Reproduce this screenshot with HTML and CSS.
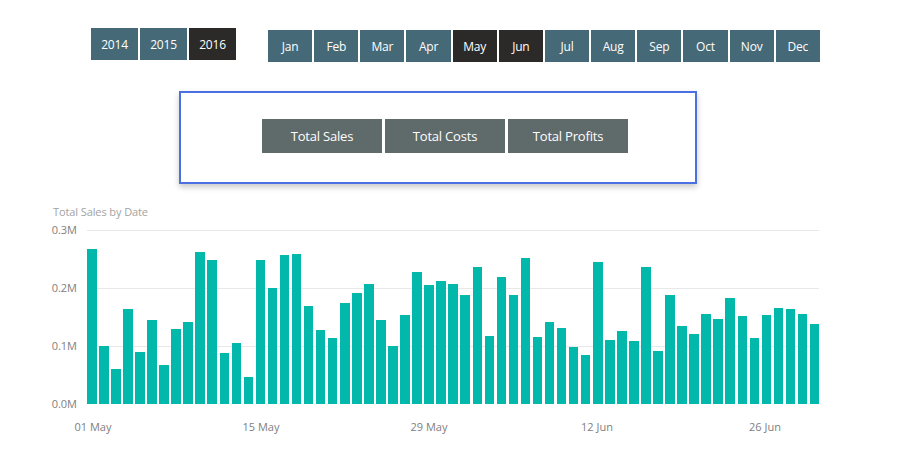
FILE: index.html
```html
<!DOCTYPE html>
<html lang="en">
<head>
<meta charset="utf-8">
<title>Sales Dashboard</title>
<link rel="stylesheet" href="styles.css">
</head>
<body>
<div class="top">
  <div class="years">
    <div class="btn year">2014</div>
    <div class="btn year">2015</div>
    <div class="btn year selected">2016</div>
  </div>
  <div class="months">
    <div class="btn month">Jan</div>
    <div class="btn month">Feb</div>
    <div class="btn month">Mar</div>
    <div class="btn month">Apr</div>
    <div class="btn month selected">May</div>
    <div class="btn month selected">Jun</div>
    <div class="btn month">Jul</div>
    <div class="btn month">Aug</div>
    <div class="btn month">Sep</div>
    <div class="btn month">Oct</div>
    <div class="btn month">Nov</div>
    <div class="btn month">Dec</div>
  </div>
</div>

<div class="card">
  <div class="metric">Total Sales</div>
  <div class="metric">Total Costs</div>
  <div class="metric">Total Profits</div>
</div>

<div class="chart">
  <div class="chart-title">Total Sales by Date</div>
  <div class="chart-body">
    <div class="yaxis">
      <span>0.3M</span>
      <span>0.2M</span>
      <span>0.1M</span>
      <span>0.0M</span>
    </div>
    <div class="plot">
      <div class="bar" style="height:155px"></div>
      <div class="bar" style="height:58px"></div>
      <div class="bar" style="height:35px"></div>
      <div class="bar" style="height:95px"></div>
      <div class="bar" style="height:52px"></div>
      <div class="bar" style="height:84px"></div>
      <div class="bar" style="height:39px"></div>
      <div class="bar" style="height:75px"></div>
      <div class="bar" style="height:82px"></div>
      <div class="bar" style="height:152px"></div>
      <div class="bar" style="height:144px"></div>
      <div class="bar" style="height:51px"></div>
      <div class="bar" style="height:61px"></div>
      <div class="bar" style="height:27px"></div>
      <div class="bar" style="height:144px"></div>
      <div class="bar" style="height:116px"></div>
      <div class="bar" style="height:149px"></div>
      <div class="bar" style="height:150px"></div>
      <div class="bar" style="height:98px"></div>
      <div class="bar" style="height:74px"></div>
      <div class="bar" style="height:66px"></div>
      <div class="bar" style="height:101px"></div>
      <div class="bar" style="height:111px"></div>
      <div class="bar" style="height:120px"></div>
      <div class="bar" style="height:84px"></div>
      <div class="bar" style="height:58px"></div>
      <div class="bar" style="height:89px"></div>
      <div class="bar" style="height:132px"></div>
      <div class="bar" style="height:119px"></div>
      <div class="bar" style="height:123px"></div>
      <div class="bar" style="height:120px"></div>
      <div class="bar" style="height:109px"></div>
      <div class="bar" style="height:137px"></div>
      <div class="bar" style="height:68px"></div>
      <div class="bar" style="height:127px"></div>
      <div class="bar" style="height:109px"></div>
      <div class="bar" style="height:146px"></div>
      <div class="bar" style="height:67px"></div>
      <div class="bar" style="height:82px"></div>
      <div class="bar" style="height:76px"></div>
      <div class="bar" style="height:57px"></div>
      <div class="bar" style="height:49px"></div>
      <div class="bar" style="height:142px"></div>
      <div class="bar" style="height:64px"></div>
      <div class="bar" style="height:73px"></div>
      <div class="bar" style="height:63px"></div>
      <div class="bar" style="height:137px"></div>
      <div class="bar" style="height:53px"></div>
      <div class="bar" style="height:109px"></div>
      <div class="bar" style="height:78px"></div>
      <div class="bar" style="height:70px"></div>
      <div class="bar" style="height:90px"></div>
      <div class="bar" style="height:85px"></div>
      <div class="bar" style="height:106px"></div>
      <div class="bar" style="height:88px"></div>
      <div class="bar" style="height:66px"></div>
      <div class="bar" style="height:89px"></div>
      <div class="bar" style="height:96px"></div>
      <div class="bar" style="height:95px"></div>
      <div class="bar" style="height:90px"></div>
      <div class="bar" style="height:80px"></div>
    </div>
    <div class="xaxis">
      <span>01 May</span>
      <span>15 May</span>
      <span>29 May</span>
      <span>12 Jun</span>
      <span>26 Jun</span>
    </div>
  </div>
</div>
</body>
</html>
```

FILE: styles.css
```css
html, body {
  margin: 0;
  padding: 0;
  background: #ffffff;
}

body {
  font-family: "Open Sans", "Noto Sans", sans-serif;
  width: 907px;
  height: 459px;
  overflow: hidden;
}

.top {
  display: flex;
  align-items: flex-start;
  padding: 28px 0 0 91px;
}

.years {
  display: flex;
  gap: 2px;
}

.months {
  display: flex;
  gap: 2px;
  margin: 2px 0 0 32px;
}

.btn {
  display: flex;
  align-items: center;
  justify-content: center;
  height: 32px;
  background: #456977;
  color: #ffffff;
  font-size: 12px;
  letter-spacing: -0.2px;
}

.year {
  width: 47px;
}

.month {
  width: 44.17px;
}

.btn.selected {
  background: #2c2a29;
}

.card {
  box-sizing: border-box;
  width: 518px;
  height: 93px;
  margin: 29px 0 0 179px;
  border: 2px solid #4b70e2;
  box-shadow: 0 3px 6px rgba(0, 0, 0, 0.22);
  padding: 26px 0 0 81px;
  display: flex;
  gap: 3px;
  align-items: flex-start;
}

.metric {
  width: 120px;
  height: 34px;
  display: flex;
  align-items: center;
  justify-content: center;
  background: #5f6a6a;
  color: #ffffff;
  font-size: 13px;
  letter-spacing: -0.2px;
}

.chart {
  margin: 21px 0 0 53px;
}

.chart-title {
  font-size: 11px;
  line-height: 14px;
  color: #a3a3a3;
  margin-bottom: 11px;
  letter-spacing: -0.1px;
}

.chart-body {
  display: grid;
  grid-template-columns: 34px 732px;
}

.yaxis {
  height: 188px;
  margin-top: -7px;
  display: flex;
  flex-direction: column;
  justify-content: space-between;
  align-items: flex-end;
  padding-right: 10px;
  font-size: 11px;
  line-height: 14px;
  color: #808080;
}

.plot {
  height: 174px;
  display: flex;
  align-items: flex-end;
  gap: 2.5px;
  background-image: repeating-linear-gradient(to bottom, #e8e8e8 0, #e8e8e8 1px, transparent 1px, transparent 58px);
}

.bar {
  flex: 1 1 0;
  background: #01b8aa;
}

.xaxis {
  grid-column: 2;
  display: flex;
  margin: 9px 0 0 -78px;
  font-size: 11px;
  line-height: 14px;
  color: #808080;
}

.xaxis span {
  width: 168px;
  flex: none;
  text-align: center;
}
```
